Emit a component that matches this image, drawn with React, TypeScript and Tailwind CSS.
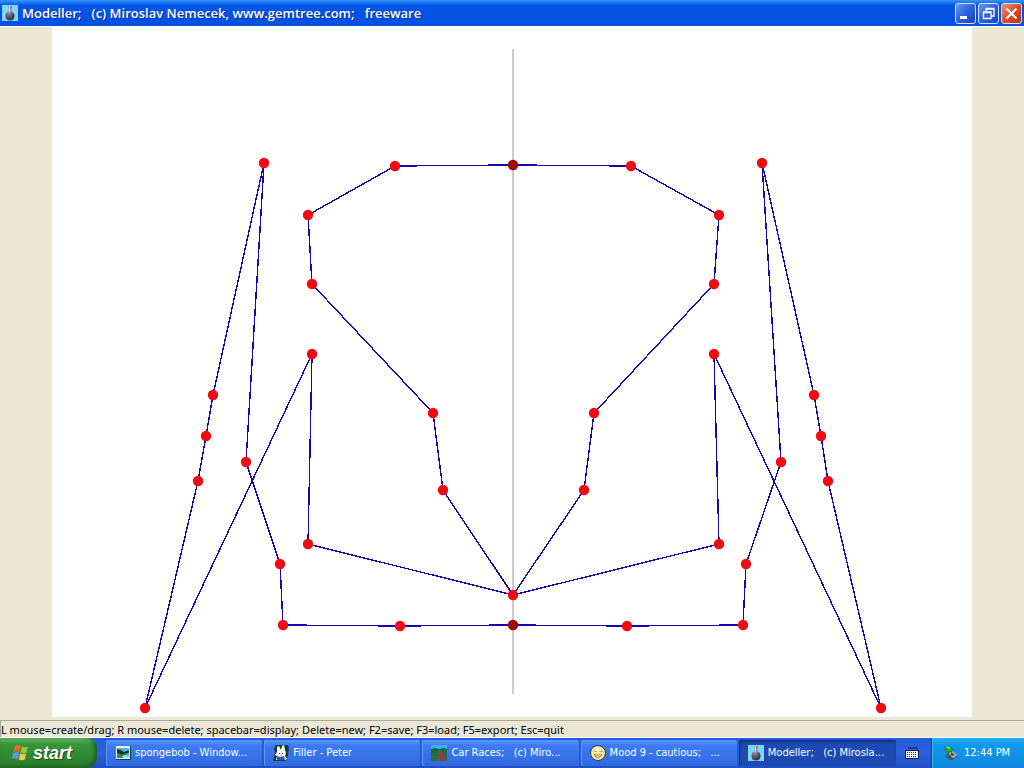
import type { ReactNode } from "react";

type Point = [number, number];

const AXIS = 513;

const outlines: Point[][] = [
  [[513, 165], [395, 166], [308, 215], [312, 284], [433, 413], [443, 490], [513, 595]],
  [[513, 595], [308, 544], [312, 354], [145, 708], [198, 481], [206, 436], [213, 395], [264, 163], [246, 462], [280, 564], [283, 625], [400, 626], [513, 625]],
  [[513, 165], [631, 166], [719, 215], [714, 284], [594, 413], [584, 490], [513, 595]],
  [[513, 595], [719, 544], [714, 354], [881, 708], [828, 481], [821, 436], [814, 395], [762, 163], [781, 462], [746, 564], [743, 625], [627, 626], [513, 625]],
];

const toPoints = (points: Point[]) => points.map((p) => p.join(",")).join(" ");

function Drawing() {
  const nodes = outlines.flat().filter(([x]) => x !== AXIS);
  return (
    <svg viewBox="52 27 920 690" className="block w-full bg-white" role="img" aria-label="Model outline">
      <rect x="512" y="49" width="2" height="645" fill="#cbcbcb" />
      <g fill="none" stroke="#1408ae" strokeWidth="1.4" shapeRendering="crispEdges">
        {outlines.map((line, i) => (
          <polyline key={i} points={toPoints(line)} />
        ))}
      </g>
      <g fill="#f20a12">
        {nodes.map(([x, y], i) => (
          <circle key={i} cx={x} cy={y} r="5.2" />
        ))}
        <circle cx={AXIS} cy="595" r="5.2" />
      </g>
      <g fill="#a00208">
        <circle cx={AXIS} cy="165" r="5.2" />
        <circle cx={AXIS} cy="625" r="5.2" />
      </g>
    </svg>
  );
}

function FlaskIcon() {
  return (
    <svg viewBox="0 0 16 16" className="size-4 shrink-0" aria-hidden="true">
      <defs>
        <radialGradient id="flask" cx="0.4" cy="0.3" r="0.8">
          <stop offset="0" stopColor="#b9b3c4" />
          <stop offset="0.5" stopColor="#656078" />
          <stop offset="1" stopColor="#25233a" />
        </radialGradient>
      </defs>
      <rect width="16" height="16" fill="#7fd6f5" />
      <path d="M6.500 1h3v5.500C12 7.500 12.500 9 12.500 11c0 3-2 4.500-4.500 4.500S3.500 14 3.500 11c0-2 .5-3.500 3-4.500z" fill="url(#flask)" />
      <path d="M7 1h1v6H7z" fill="#c9dbe4" />
    </svg>
  );
}

function PictureIcon() {
  return (
    <svg viewBox="0 0 16 16" className="size-4 shrink-0" aria-hidden="true">
      <rect x="1" y="1" width="15" height="14" fill="#153a50" />
      <rect x="1" y="1" width="14" height="13" fill="#e9f4e9" />
      <rect x="2" y="3" width="12" height="10" fill="#53b9e4" />
      <path d="M2 4l4 1 3 2 5-2v3l-4 1-4 1-4-2z" fill="#113e36" />
      <path d="M2 8l4 2 4-1 4 2v2H2z" fill="#2c8c4b" />
      <path d="M7 11l4-1 3 1v2H8z" fill="#9de1e6" />
    </svg>
  );
}

function RabbitIcon() {
  return (
    <svg viewBox="0 0 16 16" className="size-4 shrink-0" aria-hidden="true">
      <path d="M3 0h12l1 4-2 11-3 1H0l1-4 1-5-1-3z" fill="#123e2c" />
      <path d="M4 2l2-1 2 4 1-4 2-1 1 5 1 3-1 3 2 3-2 1H3l1-4-2-1 2-3z" fill="#f8fcff" />
      <path d="M4 11l3 1 4-1 1 4H4z" fill="#3355b4" />
      <path d="M6 8h1v1H6zM9 8h1v1H9z" fill="#1c2945" />
      <path d="M7 10h2v1H7z" fill="#ed99a5" />
    </svg>
  );
}

function RaceIcon() {
  return (
    <svg viewBox="0 0 16 16" className="size-4 shrink-0" aria-hidden="true">
      <rect width="16" height="16" fill="#236c3d" />
      <rect width="16" height="5" fill="#31b5ed" />
      <path d="M0 4l4-1 4 1 5-1 3 1v2H0z" fill="#176544" />
      <path d="M8 5h2l6 11H5z" fill="#62535a" />
      <path d="M9 7h2l2 9h-3z" fill="#b52e36" />
      <path d="M0 11h4v2H0z" fill="#16863c" />
    </svg>
  );
}

function SmileyIcon() {
  return (
    <svg viewBox="0 0 16 16" className="size-4 shrink-0" aria-hidden="true">
      <circle cx="8" cy="8" r="7.500" fill="#fae3a0" stroke="#3d3a31" />
      <ellipse cx="7" cy="5" rx="4" ry="3" fill="#fff3cb" />
      <path d="M3.500 6.500q1.500-1 3 0M9.500 6.500q1.500-1 3 0M4 9.500q4 1 8 0-1 3-4 3t-4-3" fill="none" stroke="#9a8152" strokeWidth="0.9" />
    </svg>
  );
}

function KeyboardIcon() {
  return (
    <svg viewBox="0 0 16 16" className="size-4" aria-hidden="true">
      <path d="M4 3.500l2-1 2 1 2-1 2 1 2-1" fill="none" stroke="#07133f" />
      <rect x="1" y="5" width="14" height="9" rx="1" fill="#091d5a" />
      <rect x="2" y="6" width="12" height="7" fill="#f4f6f5" />
      <path d="M3 7.500h10M3 9.500h10M3 11.500h10" stroke="#1f2f55" strokeDasharray="1 1" />
    </svg>
  );
}

function DeviceIcon() {
  return (
    <svg viewBox="0 0 16 16" className="size-4" aria-hidden="true">
      <path d="M5 7l6-2 4 6-4 4-4 0-3-4z" fill="#445a67" />
      <path d="M6 8l5-2 4 4-4 3z" fill="#b5c5bd" />
      <path d="M8 9l3-1 2 2-3 1z" fill="#514157" />
      <path d="M2 1l8 2v6L8 6l-2 4-1-4-3-1 2-1z" fill="#2aac35" stroke="#16763b" strokeWidth="0.6" />
      <path d="M3 1l6 2-2 1z" fill="#a3e888" />
    </svg>
  );
}

function WindowsFlag() {
  return (
    <svg viewBox="0 0 18 18" className="size-[18px] shrink-0" aria-hidden="true">
      <path d="M4 2q3-2 6 0L8.500 8Q6 6.500 2.500 8z" fill="#f1642d" />
      <path d="M11 2.500q3 1.500 6 0L15.500 8.500q-3 1.500-6 0z" fill="#8bd044" />
      <path d="M2.200 9q3-1.500 6 0L6.700 15q-3-1.500-6 0z" fill="#6395ee" />
      <path d="M9.200 9.500q3 1.500 6 0L13.700 15.500q-3 1.500-6 0z" fill="#f8ca3e" />
    </svg>
  );
}

function CaptionButton({ label, close, children }: { label: string; close?: boolean; children: ReactNode }) {
  const tone = close
    ? "from-[#ef9071] via-[#df4b26] to-[#bd3213]"
    : "from-[#6a95f1] via-[#2b61df] to-[#1747c2]";
  return (
    <button
      aria-label={label}
      className={`flex size-[21px] items-center justify-center rounded-[3px] border border-[#d5e2fb] bg-linear-to-br ${tone}`}
    >
      <svg viewBox="0 0 19 19" className="size-[19px]" fill="none" stroke="white" aria-hidden="true">
        {children}
      </svg>
    </button>
  );
}

function Task({ icon, active, children }: { icon: ReactNode; active?: boolean; children: string }) {
  const tone = active
    ? "bg-[#1d4ab2] shadow-[inset_1px_2px_2px_#0d2f82]"
    : "bg-linear-to-b from-[#5a97fb] via-[#3c7cf4] via-20% to-[#3069df] shadow-[inset_1px_0_0_#5b9bff,inset_-1px_0_0_#2458c9]";
  return (
    <button className={`flex h-[26px] min-w-0 flex-1 items-center gap-1 rounded-[2px] pr-2 pl-[9px] text-left ${tone}`}>
      {icon}
      <span className="truncate whitespace-pre text-white">{children}</span>
    </button>
  );
}

export default function App() {
  return (
    <div className="flex min-h-screen flex-col bg-[#ebe8d8] font-['DejaVu_Sans_Condensed','Noto_Sans',sans-serif] text-[11px] leading-4 text-black">
      <header className="flex h-[26px] shrink-0 items-center gap-1 bg-linear-to-b from-[#3a94ff] via-[#0455e8] via-20% to-[#0450e2] pr-[2px] pl-[2px]">
        <FlaskIcon />
        <h1 className="min-w-0 flex-1 truncate whitespace-pre font-['Open_Sans','Noto_Sans',sans-serif] text-[13px] font-semibold text-white [text-shadow:1px_1px_0_#0b2f91]">
          {"Modeller;   (c) Miroslav Nemecek, www.gemtree.com;   freeware"}
        </h1>
        <div className="flex gap-[2px]">
          <CaptionButton label="Minimize">
            <path d="M4 13.500h7" strokeWidth="3" />
          </CaptionButton>
          <CaptionButton label="Restore">
            <path d="M7 7V4.500h8V12h-2.500M7 5h8M4.500 8h7.500v6.500H4.500zM4.500 8.500H12" strokeWidth="1.3" />
          </CaptionButton>
          <CaptionButton label="Close" close>
            <path d="M4.500 4.500l10 10M14.500 4.500l-10 10" strokeWidth="2.2" />
          </CaptionButton>
        </div>
      </header>

      <main className="flex-1 border-t border-white px-13">
        <Drawing />
      </main>

      <footer className="shrink-0">
        <div className="border-b border-white pt-[3px]">
          <p className="h-[17px] truncate border-t border-l border-[#aaa798] font-['Noto_Sans','Open_Sans',sans-serif] leading-[17px]">
            L mouse=create/drag; R mouse=delete; spacebar=display; Delete=new; F2=save; F3=load; F5=export; Esc=quit
          </p>
        </div>
        <div className="flex h-[30px] items-center bg-linear-to-b from-[#245bdb] via-[#2c62dc] to-[#1f4fc4]">
          <button className="flex h-full w-[97px] shrink-0 items-center gap-1 rounded-r-[10px] bg-linear-to-b from-[#65b35f] via-[#39953b] via-20% to-[#2b7c2b] pl-[11px] font-['Liberation_Sans',sans-serif] text-[18px] font-bold text-white italic shadow-[inset_-3px_-2px_4px_#1e641f] [text-shadow:1px_1px_1px_#1b4a1b]">
            <WindowsFlag />
            start
          </button>
          <nav aria-label="Open windows" className="ml-[9px] flex min-w-0 flex-1 gap-px">
            <Task icon={<PictureIcon />}>spongebob - Window...</Task>
            <Task icon={<RabbitIcon />}>Filler - Peter</Task>
            <Task icon={<RaceIcon />}>{"Car Races;   (c) Miro..."}</Task>
            <Task icon={<SmileyIcon />}>{"Mood 9 - cautious;   ..."}</Task>
            <Task icon={<FlaskIcon />} active>{"Modeller;   (c) Mirosla..."}</Task>
          </nav>
          <button aria-label="Keyboard layout" className="flex h-full w-[35px] shrink-0 items-center pl-2">
            <KeyboardIcon />
          </button>
          <div className="flex h-full w-[93px] shrink-0 items-center gap-[6px] border-l border-[#0b3a9c] bg-linear-to-b from-[#2bb0f5] via-[#129aee] via-20% to-[#1088dc] pl-[10px] text-white shadow-[inset_1px_0_0_#3fc2fb]">
            <DeviceIcon />
            <time>12:44 PM</time>
          </div>
        </div>
      </footer>
    </div>
  );
}
